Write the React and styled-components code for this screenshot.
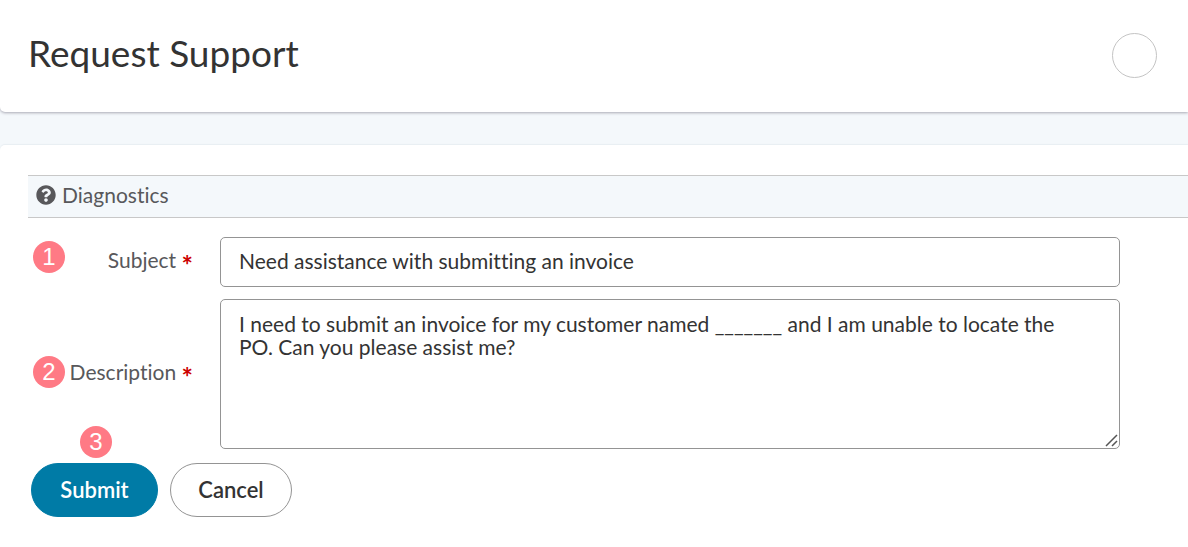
import { useState } from "react";
import styled, { createGlobalStyle } from "styled-components";
import { FaQuestionCircle } from "react-icons/fa";

const GlobalStyle = createGlobalStyle`
  * {
    box-sizing: border-box;
  }
  body {
    margin: 0;
    background-color: #ffffff;
    color: #333333;
    font-family: Lato, "Open Sans", sans-serif;
    font-size: 21px;
    font-variant-ligatures: none;
  }
  button,
  input,
  textarea {
    font-family: inherit;
    font-size: inherit;
    font-variant-ligatures: none;
    color: inherit;
  }
`;

const Page = styled.div`
  background-color: #f4f8fb;
`;

const Header = styled.header`
  display: flex;
  align-items: center;
  justify-content: space-between;
  height: 112px;
  padding: 0 31px 2px 28px;
  background-color: #ffffff;
  border-radius: 0 0 0 5px;
  box-shadow: 0 1px 3px #a9a9b4;
`;

const Title = styled.h1`
  margin: 0;
  padding-bottom: 4px;
  font-size: 37px;
  font-weight: normal;
  line-height: 44px;
`;

const RoundButton = styled.button`
  width: 45px;
  height: 45px;
  padding: 0;
  background-color: #ffffff;
  border: 1px solid #c4c4c4;
  border-radius: 50%;
`;

const Panel = styled.main`
  margin-top: 33px;
  padding: 30px 0 30px 28px;
  background-color: #ffffff;
  border-radius: 5px 0 0 0;
  box-shadow: 0 -1px 1px #e8eef2;
`;

const SectionTitle = styled.h2`
  display: flex;
  align-items: center;
  gap: 6px;
  height: 43px;
  margin: 0 0 19px;
  padding: 0 8px 3px;
  background-color: #f4f8fb;
  border-top: 1px solid #c8c8c8;
  border-bottom: 1px solid #c8c8c8;
  color: #58585b;
  font-size: 21px;
  font-weight: normal;
  line-height: 24px;
  svg {
    width: 20px;
    height: 20px;
  }
`;

const Row = styled.div`
  position: relative;
  display: grid;
  grid-template-columns: 165px 1fr;
  gap: 27px;
  align-items: center;
  margin-bottom: 12px;
  padding-right: 68px;
`;

const Label = styled.label`
  padding-bottom: 4px;
  color: #58585b;
  line-height: 26px;
  text-align: right;
`;

const Required = styled.span`
  color: #cc0000;
  font-size: 27px;
  font-weight: bold;
  line-height: 1px;
  vertical-align: -7px;
`;

const Input = styled.input`
  width: 100%;
  height: 50px;
  padding: 0 18px 3px;
  border: 1px solid #949494;
  border-radius: 5px;
`;

const TextareaWrapper = styled.div`
  position: relative;
`;

const Textarea = styled.textarea`
  display: block;
  width: 100%;
  height: 150px;
  padding: 12px 36px 12px 18px;
  border: 1px solid #949494;
  border-radius: 5px;
  line-height: 23px;
  resize: vertical;
  &::-webkit-resizer {
    background: transparent;
  }
`;

const Grip = styled.svg`
  position: absolute;
  right: 2px;
  bottom: 2px;
  pointer-events: none;
`;

const Actions = styled.div`
  position: relative;
  display: flex;
  gap: 12px;
  margin-top: 14px;
  padding-left: 3px;
`;

const Button = styled.button`
  height: 54px;
  min-width: ${(props) => (props.$primary ? "127px" : "122px")};
  padding: 0 26px 2px;
  background-color: ${(props) => (props.$primary ? "#007ba6" : "#ffffff")};
  border: 1px solid ${(props) => (props.$primary ? "#007ba6" : "#949494")};
  border-radius: 27px;
  color: ${(props) => (props.$primary ? "#ffffff" : "#333333")};
  font-size: 22px;
  font-weight: 600;
`;

const Step = styled.span`
  position: absolute;
  top: ${(props) => props.$top}px;
  left: ${(props) => props.$left}px;
  display: flex;
  align-items: center;
  justify-content: center;
  width: 32px;
  height: 32px;
  border-radius: 50%;
  background-color: #ff7a85;
  color: #ffffff;
  font-family: "Liberation Sans", Arial, sans-serif;
  font-size: 24px;
`;

export default function App() {
  const [subject, setSubject] = useState(
    "Need assistance with submitting an invoice"
  );
  const [description, setDescription] = useState(
    "I need to submit an invoice for my customer named _______ and I am unable to locate the PO. Can you please assist me?"
  );

  return (
    <>
      <GlobalStyle />
      <Page>
        <Header>
          <Title>Request Support</Title>
          <RoundButton type="button" aria-label="Account" />
        </Header>
        <Panel>
          <SectionTitle>
            <FaQuestionCircle />
            Diagnostics
          </SectionTitle>
          <form onSubmit={(ev) => ev.preventDefault()}>
            <Row>
              <Step $top={4} $left={5}>1</Step>
              <Label htmlFor="subject">
                Subject <Required>*</Required>
              </Label>
              <Input
                id="subject"
                value={subject}
                onChange={(ev) => setSubject(ev.target.value)}
              />
            </Row>
            <Row>
              <Step $top={57} $left={5}>2</Step>
              <Label htmlFor="description">
                Description <Required>*</Required>
              </Label>
              <TextareaWrapper>
                <Textarea
                  id="description"
                  value={description}
                  onChange={(ev) => setDescription(ev.target.value)}
                />
                <Grip width="13" height="13" viewBox="0 0 13 13">
                  <path
                    d="M1 12 L12 1 M7 12 L12 7"
                    fill="none"
                    stroke="#555555"
                    strokeWidth="1.5"
                  />
                </Grip>
              </TextareaWrapper>
            </Row>
            <Actions>
              <Step $top={-37} $left={52}>3</Step>
              <Button type="submit" $primary>
                Submit
              </Button>
              <Button type="button">Cancel</Button>
            </Actions>
          </form>
        </Panel>
      </Page>
    </>
  );
}
